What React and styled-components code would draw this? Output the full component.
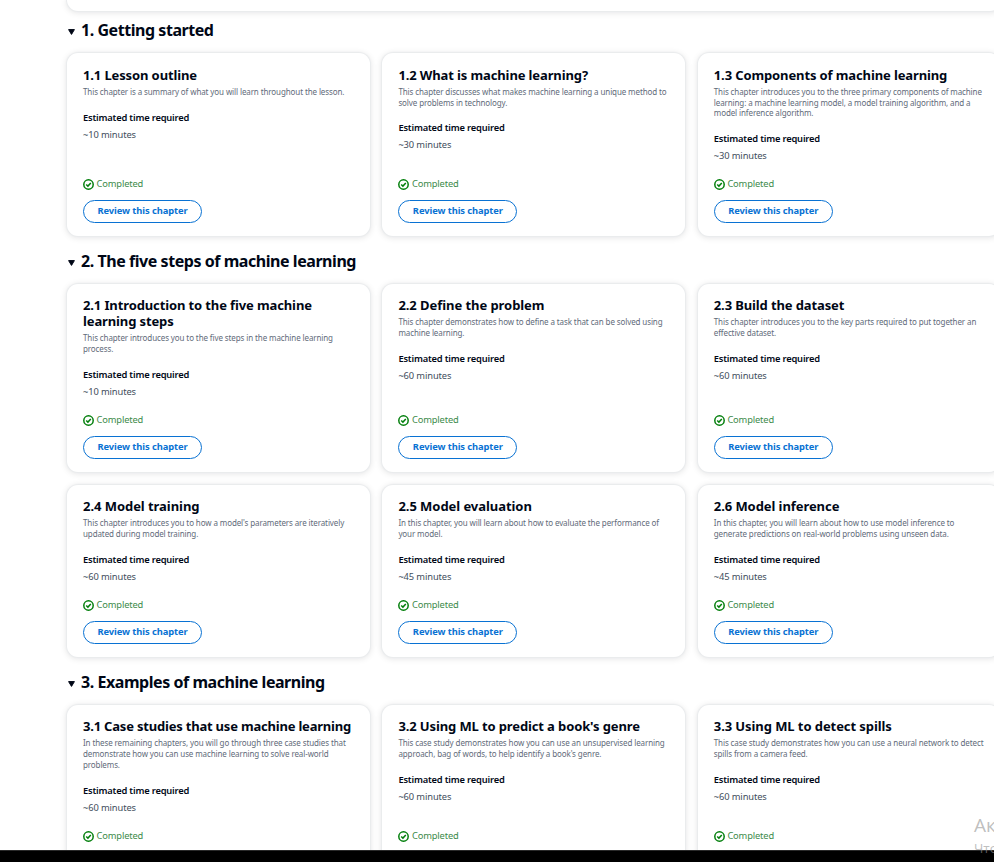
import React from "react";
import styled, { createGlobalStyle } from "styled-components";

const GlobalStyle = createGlobalStyle`
  *, *::before, *::after { box-sizing: border-box; }
  html, body { margin: 0; padding: 0; overflow: hidden; background: #fff; }
  body { font-family: "Noto Sans", "Open Sans", sans-serif; color: #000716; }
`;

const Page = styled.div`
  position: relative;
  display: flex;
  flex-direction: column;
  width: 994px;
  height: 862px;
  overflow: hidden;
`;

const Content = styled.main`
  flex: 1;
  min-height: 0;
  overflow: hidden;
  padding-left: 67px;
`;

const cardShadow = "0 0 1px 1px #e9ebed, 0 1px 6px 1px rgba(0, 7, 22, 0.1)";

const IntroPanel = styled.div`
  width: 934px;
  height: 11px;
  border-radius: 0 0 11px 11px;
  background: #fff;
  box-shadow: ${cardShadow};
`;

const Section = styled.section`
  display: flex;
  flex-direction: column;
`;

const SectionHeader = styled.header`
  display: flex;
  align-items: center;
  height: ${(p) => p.$height}px;
  padding: ${(p) => p.$padTop}px 0 ${(p) => p.$padBottom}px 1px;
`;

const Caret = styled.svg`
  flex: none;
  width: 7px;
  height: 6px;
  margin: 4px 6px 0 0;
`;

const SectionTitle = styled.h2`
  margin: 0;
  font-size: 16px;
  line-height: 20px;
  font-weight: 700;
  letter-spacing: -0.45px;
  white-space: nowrap;
`;

const CardGrid = styled.div`
  display: grid;
  grid-template-columns: repeat(3, 302.6px);
  grid-template-rows: ${(p) => p.$rows};
  gap: 13px 12.8px;
`;

const Card = styled.article`
  display: flex;
  flex-direction: column;
  align-items: flex-start;
  padding: ${(p) => p.$padTop}px 0 13px 16px;
  border-radius: 11px;
  background: #fff;
  box-shadow: ${cardShadow};
`;

const CardTitle = styled.h3`
  margin: 0 0 4px;
  font-size: 13px;
  line-height: 16px;
  font-weight: 700;
  letter-spacing: ${(p) => p.$tracking}px;
  white-space: pre;
`;

const Description = styled.p`
  margin: 0 0 ${(p) => p.$gap}px;
  font-size: 8px;
  line-height: 10.67px;
  letter-spacing: -0.105px;
  color: #5f6b7a;
  white-space: pre;
`;

const TimeLabel = styled.div`
  font-size: 9.33px;
  line-height: 13.33px;
  font-weight: 600;
  letter-spacing: -0.18px;
  white-space: nowrap;
`;

const TimeValue = styled.div`
  margin-top: 3.6px;
  font-size: 9.33px;
  line-height: 13.33px;
  letter-spacing: -0.12px;
  color: #414d5c;
`;

const Status = styled.div`
  display: flex;
  align-items: center;
  gap: 2.6px;
  height: 14px;
  margin-top: auto;
  font-size: 9.33px;
  line-height: 14px;
  letter-spacing: -0.16px;
  color: #3c8a4a;
`;

const StatusIcon = styled.svg`
  width: 11px;
  height: 11px;
  fill: none;
  stroke: #037f0c;
  stroke-width: 1.5;
`;

const ActionSlot = styled.div`
  height: 23px;
  margin-top: 9px;
`;

const ReviewButton = styled.button`
  display: block;
  width: 119px;
  height: 23px;
  margin: 0;
  padding: 0 0 1px;
  border: 1.33px solid #0972d3;
  border-radius: 12px;
  background: #fff;
  color: #0972d3;
  font: 700 9.33px/14px "Noto Sans", "Open Sans", sans-serif;
  letter-spacing: -0.08px;
  white-space: nowrap;
`;

const BottomBar = styled.div`
  flex: none;
  height: 12px;
  border-top: 1px solid #2a2a2a;
  background: #000;
`;

const Watermark = styled.div`
  position: absolute;
  left: 974px;
  top: 813px;
  color: rgba(150, 150, 150, 0.62);
  font-family: "Open Sans", "Noto Sans", sans-serif;
  white-space: nowrap;
`;

const WatermarkTitle = styled.div`
  font-size: 19px;
  line-height: 25px;
`;

const WatermarkText = styled.div`
  font-size: 13.5px;
  line-height: 20px;
`;

const sections = [
  {
    title: "1. Getting started",
    headerHeight: 42,
    padTop: 0,
    padBottom: 5,
    cardPadTop: 14,
    descriptionGap: 13,
    rows: "183px",
    cards: [
      { title: "1.1 Lesson outline", description: "This chapter is a summary of what you will learn throughout the lesson.", minutes: 10 },
      { title: "1.2 What is machine learning?", description: "This chapter discusses what makes machine learning a unique method to\nsolve problems in technology.", minutes: 30 },
      { title: "1.3 Components of machine learning", description: "This chapter introduces you to the three primary components of machine\nlearning: a machine learning model, a model training algorithm, and a\nmodel inference algorithm.", minutes: 30 },
    ],
  },
  {
    title: "2. The five steps of machine learning",
    headerHeight: 48,
    padTop: 2,
    padBottom: 0,
    cardPadTop: 13.3,
    descriptionGap: 13.7,
    rows: "188px 172px",
    cards: [
      { title: "2.1 Introduction to the five machine\nlearning steps", description: "This chapter introduces you to the five steps in the machine learning\nprocess.", minutes: 10 },
      { title: "2.2 Define the problem", tracking: -0.06, description: "This chapter demonstrates how to define a task that can be solved using\nmachine learning.", minutes: 60 },
      { title: "2.3 Build the dataset", description: "This chapter introduces you to the key parts required to put together an\neffective dataset.", minutes: 60 },
      { title: "2.4 Model training", tracking: -0.05, description: "This chapter introduces you to how a model's parameters are iteratively\nupdated during model training.", minutes: 60 },
      { title: "2.5 Model evaluation", tracking: -0.05, description: "In this chapter, you will learn about how to evaluate the performance of\nyour model.", minutes: 45 },
      { title: "2.6 Model inference", tracking: -0.07, description: "In this chapter, you will learn about how to use model inference to\ngenerate predictions on real-world problems using unseen data.", minutes: 45 },
    ],
  },
  {
    title: "3. Examples of machine learning",
    headerHeight: 48,
    padTop: 2,
    padBottom: 0,
    cardPadTop: 13.3,
    descriptionGap: 13.7,
    rows: "183px",
    hideAction: true,
    cards: [
      { title: "3.1 Case studies that use machine learning", tracking: -0.2, description: "In these remaining chapters, you will go through three case studies that\ndemonstrate how you can use machine learning to solve real-world\nproblems.", minutes: 60 },
      { title: "3.2 Using ML to predict a book's genre", description: "This case study demonstrates how you can use an unsupervised learning\napproach, bag of words, to help identify a book's genre.", minutes: 60 },
      { title: "3.3 Using ML to detect spills", tracking: -0.08, description: "This case study demonstrates how you can use a neural network to detect\nspills from a camera feed.", minutes: 60 },
    ],
  },
];

function ChapterCard({ title, description, minutes, tracking = -0.12, padTop, gap, hideAction }) {
  return (
    <Card $padTop={padTop}>
      <CardTitle $tracking={tracking}>{title}</CardTitle>
      <Description $gap={gap}>{description}</Description>
      <TimeLabel>Estimated time required</TimeLabel>
      <TimeValue>~{minutes} minutes</TimeValue>
      <Status>
        <StatusIcon viewBox="0 0 11 11">
          <circle cx="5.5" cy="5.5" r="4.7" />
          <path d="M3.2 5.5 L4.9 7.1 L7.8 3.9" />
        </StatusIcon>
        Completed
      </Status>
      <ActionSlot>{!hideAction && <ReviewButton>Review this chapter</ReviewButton>}</ActionSlot>
    </Card>
  );
}

export default function App() {
  return (
    <Page>
      <GlobalStyle />
      <Content>
        <IntroPanel />
        {sections.map((s) => (
          <Section key={s.title}>
            <SectionHeader $height={s.headerHeight} $padTop={s.padTop} $padBottom={s.padBottom}>
              <Caret viewBox="0 0 7 6">
                <path d="M0.6 0.6 H6.4 L3.5 5.4 Z" fill="#000716" stroke="#000716" strokeLinejoin="round" />
              </Caret>
              <SectionTitle>{s.title}</SectionTitle>
            </SectionHeader>
            <CardGrid $rows={s.rows}>
              {s.cards.map((card) => (
                <ChapterCard
                  key={card.title}
                  {...card}
                  padTop={s.cardPadTop}
                  gap={s.descriptionGap}
                  hideAction={s.hideAction}
                />
              ))}
            </CardGrid>
          </Section>
        ))}
      </Content>
      <BottomBar />
      <Watermark>
        <WatermarkTitle>Ак</WatermarkTitle>
        <WatermarkText>Что</WatermarkText>
      </Watermark>
    </Page>
  );
}
